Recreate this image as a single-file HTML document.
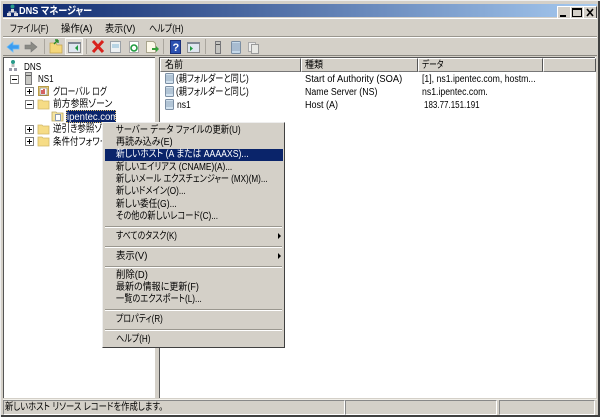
<!DOCTYPE html>
<html><head><meta charset="utf-8"><style>
html,body{margin:0;padding:0;background:#d4d0c8}
body{width:600px;height:417px;position:relative;overflow:hidden;background:#d4d0c8;font-family:"Liberation Sans","Noto Sans CJK JP",sans-serif;font-size:10px;color:#000;font-feature-settings:"palt" 1;filter:blur(.25px)}
div,span,svg{position:absolute}
.t{white-space:nowrap;line-height:12px;height:12px;margin-top:2px;transform-origin:0 0;transform:scaleX(var(--s,1))}
.m{left:116px}
.sep{left:105px;width:177px;height:1px;background:#9a978f;border-bottom:1px solid #fff}
.hd{top:58px;height:12px;background:#d4d0c8;border-top:1px solid #fff;border-left:1px solid #fff;border-right:1px solid #555;border-bottom:1px solid #777;box-sizing:content-box}
.btn{top:6px;width:12px;height:11px;background:#d4d0c8;border:1px solid;border-color:#fff #404040 #404040 #fff}
.exp{left:25px;width:7px;height:7px;border:1px solid #808080;background:#fff}
.exp:before{content:"";position:absolute;left:1px;top:3px;width:5px;height:1px;background:#000}
.plus:after{content:"";position:absolute;left:3px;top:1px;width:1px;height:5px;background:#000}
</style></head><body>
<div style="left:0;top:0;width:598px;height:415px;border-right:2px solid #404040;border-bottom:2px solid #404040"></div>
<div style="left:0;top:0;width:600px;height:1px;background:#eee"></div>
<div style="left:0;top:0;width:1px;height:417px;background:#eee"></div>
<div style="left:3px;top:4px;width:594px;height:13px;background:linear-gradient(90deg,#0a246a,#a6caf0)"></div>
<svg style="left:6px;top:4px" width="13" height="13" viewBox="0 0 13 13"><circle cx="6.5" cy="2.500" r="2" fill="#2a9a8a"/><rect x="5" y="5" width="3" height="3" fill="#d8d8d8"/><rect x="1" y="9" width="4" height="3" fill="#d8d8e0"/><rect x="8" y="9" width="4" height="3" fill="#d8d8e0"/><path d="M3 9V8h7v1" stroke="#eee" fill="none"/></svg>
<div class="t" style="left:19px;top:3px;color:#fff;font-weight:bold;font-size:10.500px;line-height:13px;height:13px;--s:.87">DNS マネージャー</div>
<div class="btn" style="left:557px"><div style="left:2px;top:8px;width:6px;height:2px;background:#000"></div></div>
<div class="btn" style="left:570px"><div style="left:1px;top:1px;width:8px;height:6px;border:1px solid #000;border-top-width:2px"></div></div>
<div class="btn" style="left:583px"><svg style="left:2px;top:1px" width="9" height="9"><path d="M1 1L7 8M7 1L1 8" stroke="#000" stroke-width="1.6"/></svg></div>

<div style="left:3px;top:18px;width:594px;height:1px;background:#fff"></div>
<div style="left:3px;top:36px;width:594px;height:1px;background:#99968e"></div>
<div style="left:3px;top:37px;width:594px;height:1px;background:#fff"></div>
<div style="left:3px;top:55px;width:594px;height:1px;background:#8a8780"></div>
<div class="t" style="left:10px;top:22px;--s:.81">ファイル(F)</div>
<div class="t" style="left:61px;top:22px;--s:.94">操作(A)</div>
<div class="t" style="left:105px;top:22px;--s:.91">表示(V)</div>
<div class="t" style="left:149px;top:22px;--s:.81">ヘルプ(H)</div>

<svg style="left:0;top:37px" width="270" height="19" viewBox="0 37 270 19">
<path d="M7 47l6-5v3h6v4h-6v3z" fill="#3b9cf0" stroke="#6bbcf8" stroke-width=".8"/>
<path d="M37 47l-6-5v3h-6v4h6v3z" fill="#8a8a84" stroke="#777" stroke-width=".6"/>
<rect x="44" y="39" width="1" height="15" fill="#aaa69e"/>
<path d="M50 43h6l1 2h5v8H50z" fill="#f4d77a" stroke="#c2a24a" stroke-width=".7"/><path d="M54 44l4-4m0 0h-3m3 0v3" stroke="#2a8a2a" stroke-width="1.4" fill="none"/>
<rect x="65.500" y="38.500" width="17" height="16" fill="#e0ddd6" stroke="#f6f5f2"/>
<rect x="68.500" y="42.500" width="12" height="10" fill="#dfe6f0" stroke="#8f8f8f"/><rect x="68" y="42" width="13" height="2" fill="#7f8794"/><path d="M78 45v6l-3-3z" fill="#1f9a3f"/>
<rect x="86" y="39" width="1" height="15" fill="#aaa69e"/>
<path d="M93 41l10 11M103 41L93 52" stroke="#d8221c" stroke-width="3"/>
<rect x="110.500" y="41.500" width="10" height="11" fill="#eef1f3" stroke="#9aa0a6"/><rect x="112" y="44" width="7" height="4" fill="#b8d4e4"/>
<rect x="129.500" y="41.500" width="9" height="11" fill="#fff" stroke="#a8a8a8"/><circle cx="134" cy="48" r="3" fill="none" stroke="#1f9a3f" stroke-width="1.6"/>
<path d="M146.500 41.500h7l2 2v9h-9z" fill="#fcf8e8" stroke="#a8a48c"/><path d="M152 48h4v-2l3 3-3 3v-2h-4z" fill="#36a03a"/>
<rect x="163" y="39" width="1" height="15" fill="#aaa69e"/>
<rect x="170.500" y="40.500" width="10" height="13" fill="#2b50b0" stroke="#1a2f7a"/><text x="172.500" y="51" font-family="Liberation Sans" font-size="11" font-weight="bold" fill="#fff">?</text>
<rect x="187.500" y="42.500" width="12" height="10" fill="#dfe6f0" stroke="#8f8f8f"/><rect x="187" y="42" width="13" height="2" fill="#7f8794"/><path d="M190 46v5l3-2.500z" fill="#1f9a3f"/>
<rect x="205" y="39" width="1" height="15" fill="#aaa69e"/>
<rect x="215.500" y="41.500" width="5" height="12" fill="#c4c4c0" stroke="#77777a"/><rect x="216" y="44" width="4" height="1" fill="#555"/>
<rect x="231.500" y="41.500" width="9" height="12" rx="1" fill="#c5d9ea" stroke="#7b8ea3"/><path d="M232 44h8M232 46h8M232 48h8M232 50h8" stroke="#8aa0b8"/>
<rect x="248.500" y="42.500" width="7" height="9" fill="#eee" stroke="#aaa"/><rect x="251.500" y="44.500" width="7" height="9" fill="#e8e8e4" stroke="#999"/>
</svg>

<!-- left pane -->
<div style="left:3px;top:57px;width:152px;height:341px;background:#fff;border-left:1px solid #555;border-top:1px solid #555;box-sizing:border-box"></div>
<!-- right pane -->
<div style="left:159px;top:57px;width:436px;height:341px;background:#fff;border-left:1px solid #555;border-top:1px solid #555;box-sizing:border-box"></div>
<div style="left:595px;top:57px;width:1px;height:341px;background:#fff"></div>
<div style="left:155px;top:58px;width:4px;height:340px;background:#d4d0c8"></div>

<div class="hd" style="left:160px;width:139px"></div>
<div class="hd" style="left:301px;width:115px"></div>
<div class="hd" style="left:418px;width:123px"></div>
<div class="hd" style="left:543px;width:51px"></div>
<div class="t" style="left:165px;top:58px;--s:.9">名前</div>
<div class="t" style="left:305px;top:58px;--s:.9">種類</div>
<div class="t" style="left:422px;top:58px;--s:.77">データ</div>

<!-- list icons -->
<svg style="left:164px;top:72px" width="12" height="40" viewBox="0 0 12 40"><g><rect x="1.500" y="1.500" width="8" height="10" rx="1" fill="#d2e2ef" stroke="#7c8fa4"/><path d="M2 4h7M2 6h7M2 8h7" stroke="#93a8bd"/></g><g transform="translate(0,13)"><rect x="1.500" y="1.500" width="8" height="10" rx="1" fill="#d2e2ef" stroke="#7c8fa4"/><path d="M2 4h7M2 6h7M2 8h7" stroke="#93a8bd"/></g><g transform="translate(0,26)"><rect x="1.500" y="1.500" width="8" height="10" rx="1" fill="#d2e2ef" stroke="#7c8fa4"/><path d="M2 4h7M2 6h7M2 8h7" stroke="#93a8bd"/></g></svg>
<div class="t" style="left:176px;top:72px;--s:.82">(親フォルダーと同じ)</div>
<div class="t" style="left:176px;top:85px;--s:.82">(親フォルダーと同じ)</div>
<div class="t" style="left:177px;top:98px;--s:.85">ns1</div>
<div class="t" style="left:305px;top:72px;--s:.93">Start of Authority (SOA)</div>
<div class="t" style="left:305px;top:85px;--s:.88">Name Server (NS)</div>
<div class="t" style="left:305px;top:98px;--s:.9">Host (A)</div>
<div class="t" style="left:422px;top:72px;--s:.87">[1], ns1.ipentec.com, hostm...</div>
<div class="t" style="left:422px;top:85px;--s:.87">ns1.ipentec.com.</div>
<div class="t" style="left:424px;top:98px;--s:.8">183.77.151.191</div>

<!-- tree -->
<svg style="left:0;top:58px" width="110" height="90" viewBox="0 58 110 90">
<circle cx="13" cy="62" r="2" fill="#2a9a8a"/><rect x="11.500" y="64" width="3" height="3" fill="#bbb"/><rect x="9" y="68" width="3" height="3" fill="#99a"/><rect x="14" y="68" width="3" height="3" fill="#99a"/>
<rect x="25.500" y="72.500" width="6" height="12" fill="#c8c8c4" stroke="#77777a"/><rect x="26" y="75" width="5" height="1" fill="#555"/>
<rect x="38.500" y="86.500" width="10" height="9" fill="#f6dc86" stroke="#b89b48"/><rect x="40" y="88" width="7" height="7" fill="#fff" stroke="#555" stroke-width=".5"/><path d="M42 94v-4M44 94v-5" stroke="#c02020" stroke-width="1.400"/>
<path d="M38 100h4l1 1h6v8H38z" fill="#f6dc86" stroke="#d1b868" stroke-width=".8"/>
<path d="M52 112h4l1 1h6v8H52z" fill="#f6e4a0" stroke="#bca860" stroke-width=".8"/><rect x="55.500" y="114.500" width="5" height="6" fill="#fff" stroke="#8a9ab0"/>
<path d="M38 125h4l1 1h6v8H38z" fill="#f6dc86" stroke="#d1b868" stroke-width=".8"/>
<path d="M38 137h4l1 1h6v8H38z" fill="#f6dc86" stroke="#d1b868" stroke-width=".8"/>
</svg>
<div class="exp" style="left:10px;top:75px"></div>
<div class="exp plus" style="left:25px;top:87px"></div>
<div class="exp" style="left:25px;top:100px"></div>
<div class="exp plus" style="left:25px;top:125px"></div>
<div class="exp plus" style="left:25px;top:137px"></div>
<div class="t" style="left:24px;top:60px;--s:.81">DNS</div>
<div class="t" style="left:38px;top:72px;--s:.8">NS1</div>
<div class="t" style="left:53px;top:85px;--s:.78">グローバル ログ</div>
<div class="t" style="left:53px;top:97px;--s:.88">前方参照ゾーン</div>
<div style="left:66px;top:110px;width:50px;height:13px;background:#0a246a;outline:1px dotted #e0c070;outline-offset:-1px"></div>
<div class="t" style="left:67px;top:110px;color:#fff;--s:.95">ipentec.com</div>
<div class="t" style="left:53px;top:122px;--s:.85">逆引き参照ゾーン</div>
<div class="t" style="left:53px;top:135px;--s:.85">条件付フォワーダー</div>

<!-- context menu -->
<div style="left:102px;top:122px;width:183px;height:226px;background:#d4d0c8;border-top:1px solid #eee;border-left:1px solid #eee;border-right:1px solid #404040;border-bottom:1px solid #404040;box-sizing:border-box"></div>
<div style="left:105px;top:149px;width:178px;height:12px;background:#0a246a"></div>
<div class="t m" style="top:123px;--s:.83">サーバー データ ファイルの更新(U)</div>
<div class="t m" style="top:135px;--s:.9">再読み込み(E)</div>
<div class="t m" style="top:147px;color:#fff;--s:.87">新しいホスト (A または AAAAXS)...</div>
<div class="t m" style="top:160px;--s:.83">新しいエイリアス (CNAME)(A)...</div>
<div class="t m" style="top:172px;--s:.81">新しいメール エクスチェンジャー (MX)(M)...</div>
<div class="t m" style="top:184px;--s:.82">新しいドメイン(O)...</div>
<div class="t m" style="top:197px;--s:.86">新しい委任(G)...</div>
<div class="t m" style="top:209px;--s:.82">その他の新しいレコード(C)...</div>
<div class="sep" style="top:226px"></div>
<div class="t m" style="top:229px;--s:.79">すべてのタスク(K)</div>
<div class="sep" style="top:246px"></div>
<div class="t m" style="top:249px;--s:.94">表示(V)</div>
<div class="sep" style="top:266px"></div>
<div class="t m" style="top:268px;--s:.94">削除(D)</div>
<div class="t m" style="top:280px;--s:.9">最新の情報に更新(F)</div>
<div class="t m" style="top:292px;--s:.82">一覧のエクスポート(L)...</div>
<div class="sep" style="top:309px"></div>
<div class="t m" style="top:312px;--s:.8">プロパティ(R)</div>
<div class="sep" style="top:329px"></div>
<div class="t m" style="top:332px;--s:.81">ヘルプ(H)</div>
<svg style="left:277px;top:233px" width="5" height="30"><path d="M1 0l3 3-3 3zM1 20l3 3-3 3z" fill="#000"/></svg>

<!-- status -->
<div style="left:3px;top:399px;width:594px;height:1px;background:#f2f0ea"></div>
<div style="left:3px;top:400px;width:340px;height:13px;border:1px solid;border-color:#888 #fff #fff #888"></div>
<div style="left:345px;top:400px;width:150px;height:13px;border:1px solid;border-color:#888 #fff #fff #888"></div>
<div style="left:499px;top:400px;width:94px;height:13px;border:1px solid;border-color:#888 #fff #fff #888"></div>
<div class="t" style="left:5px;top:400px;--s:.83">新しいホスト リソース レコードを作成します。</div>
</body></html>
